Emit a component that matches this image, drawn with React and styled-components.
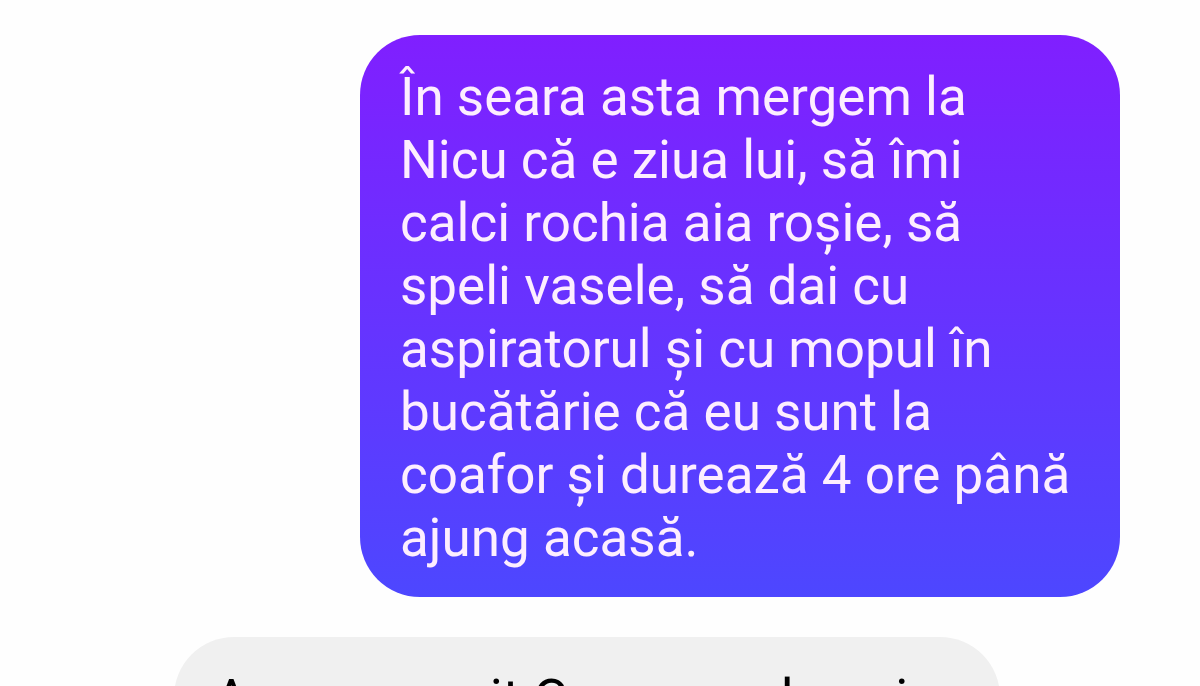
import React from 'react';
import styled, { createGlobalStyle } from 'styled-components';

const messages = [
    {
        id: 1,
        mine: true,
        text: 'În seara asta mergem la Nicu că e ziua lui, să îmi calci rochia aia roșie, să speli vasele, să dai cu aspiratorul și cu mopul în bucătărie că eu sunt la coafor și durează 4 ore până ajung acasă.',
    },
    {
        id: 2,
        mine: false,
        text: 'Acum a venit Cezara pe la noi',
    },
];

function App() {
    return (
        <>
            <GlobalStyle />
            <ChatWrapper>
                {messages.map(({ id, mine, text }) => (
                    <MessageBubble key={id} $mine={mine}>
                        {text}
                    </MessageBubble>
                ))}
            </ChatWrapper>
        </>
    );
}

const GlobalStyle = createGlobalStyle`
    * {
        box-sizing: border-box;
    }
    body {
        margin: 0;
        background: #fefefe;
    }
`;

const ChatWrapper = styled.main`
    display: flex;
    flex-direction: column;
    gap: 40px;
    height: 100vh;
    overflow: hidden;
    padding: 35px 80px 0 174px;
    font-family: Roboto, sans-serif;
`;

const MessageBubble = styled.p`
    flex-shrink: 0;
    align-self: ${(props) => (props.$mine ? 'flex-end' : 'flex-start')};
    max-width: ${(props) => (props.$mine ? '760px' : '828px')};
    margin: 0;
    padding: ${(props) => (props.$mine ? '31px 40px 27px' : '31px 92px 27px 40px')};
    border-radius: 60px;
    font-size: 53px;
    line-height: 63px;
    color: ${(props) => (props.$mine ? '#fdeeff' : '#000000')};
    background: ${(props) =>
        props.$mine ? 'linear-gradient(#801fff, #4d47ff)' : '#f0f0f0'};
`;

export default App;
